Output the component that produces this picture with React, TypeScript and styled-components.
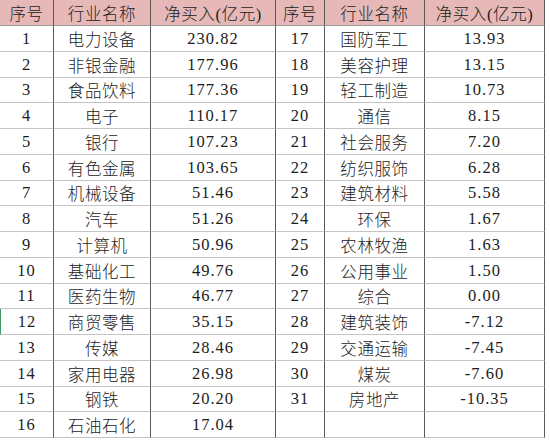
import React from 'react';
import styled, { createGlobalStyle } from 'styled-components';

const GlobalStyle = createGlobalStyle`
  html, body {
    margin: 0;
    padding: 0;
    background: #ffffff;
  }
`;

const Sheet = styled.div`
  width: 550px;
  height: 441px;
  background: #fff;
  overflow: hidden;
`;

const Grid = styled.div`
  display: grid;
  grid-template-columns: 54px 97px 125px 49px 100px 120px;
  grid-template-rows: 26px repeat(16, 25.75px);
  width: 545px;
`;

const Cell = styled.div<{ $head?: boolean; $mark?: boolean; $num?: boolean }>`
  display: flex;
  align-items: center;
  justify-content: center;
  box-sizing: border-box;
  border-right: 1px solid #5a5a5a;
  border-bottom: 1px solid ${(p) => (p.$head ? '#9a9a9a' : '#c4c4c4')};
  border-left: ${(p) => (p.$mark ? '1px solid #3f9a6a' : 'none')};
  background: ${(p) => (p.$head ? '#e6b8b7' : '#fff')};
  color: #1c1c1c;
  font-family: "Liberation Serif", "Noto Sans CJK SC", serif;
  font-weight: ${(p) => (p.$num ? 400 : 300)};
  font-size: 16.5px;
  letter-spacing: ${(p) => (p.$num ? '1px' : '0.6px')};
  white-space: nowrap;
  padding-top: 1px;
`;

type Row = [string, string, string];

const left: Row[] = [
  ['1', '电力设备', '230.82'],
  ['2', '非银金融', '177.96'],
  ['3', '食品饮料', '177.36'],
  ['4', '电子', '110.17'],
  ['5', '银行', '107.23'],
  ['6', '有色金属', '103.65'],
  ['7', '机械设备', '51.46'],
  ['8', '汽车', '51.26'],
  ['9', '计算机', '50.96'],
  ['10', '基础化工', '49.76'],
  ['11', '医药生物', '46.77'],
  ['12', '商贸零售', '35.15'],
  ['13', '传媒', '28.46'],
  ['14', '家用电器', '26.98'],
  ['15', '钢铁', '20.20'],
  ['16', '石油石化', '17.04'],
];

const right: Row[] = [
  ['17', '国防军工', '13.93'],
  ['18', '美容护理', '13.15'],
  ['19', '轻工制造', '10.73'],
  ['20', '通信', '8.15'],
  ['21', '社会服务', '7.20'],
  ['22', '纺织服饰', '6.28'],
  ['23', '建筑材料', '5.58'],
  ['24', '环保', '1.67'],
  ['25', '农林牧渔', '1.63'],
  ['26', '公用事业', '1.50'],
  ['27', '综合', '0.00'],
  ['28', '建筑装饰', '-7.12'],
  ['29', '交通运输', '-7.45'],
  ['30', '煤炭', '-7.60'],
  ['31', '房地产', '-10.35'],
  ['', '', ''],
];

const headers = ['序号', '行业名称', '净买入(亿元)'];

export default function App() {
  return (
    <Sheet>
      <GlobalStyle />
      <Grid>
        {[...headers, ...headers].map((h, i) => (
          <Cell key={'h' + i} $head>
            {h}
          </Cell>
        ))}
        {left.map((row, i) => {
          const r = right[i];
          return (
            <React.Fragment key={i}>
              <Cell $num $mark={row[0] === '12'}>{row[0]}</Cell>
              <Cell>{row[1]}</Cell>
              <Cell $num>{row[2]}</Cell>
              <Cell $num>{r[0]}</Cell>
              <Cell>{r[1]}</Cell>
              <Cell $num>{r[2]}</Cell>
            </React.Fragment>
          );
        })}
      </Grid>
    </Sheet>
  );
}
